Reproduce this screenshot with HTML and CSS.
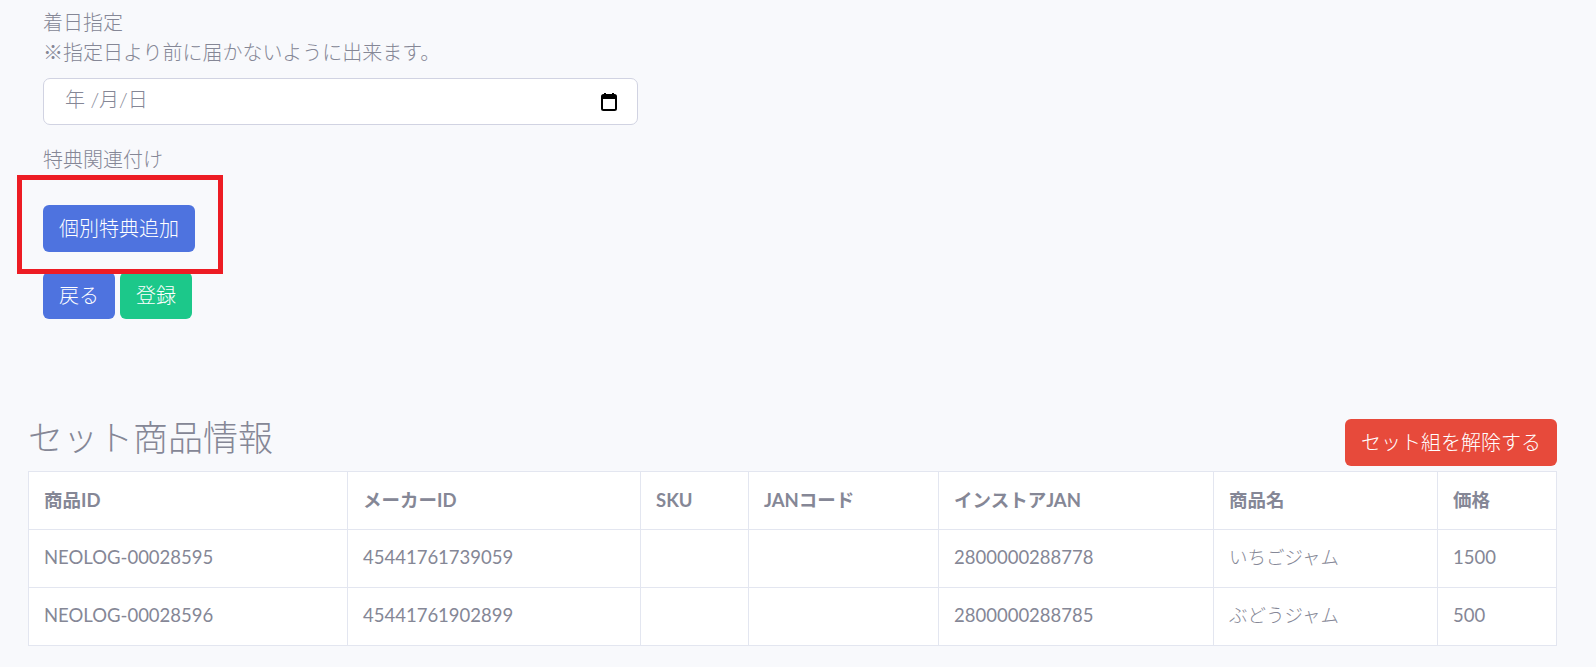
FILE: index.html
```html
<!DOCTYPE html>
<html lang="ja">
<head>
<meta charset="utf-8">
<title>セット商品情報</title>
<link rel="stylesheet" href="styles.css">
</head>
<body>
<section class="form">
  <div class="field-label">着日指定</div>
  <div class="field-label">※指定日より前に届かないように出来ます。</div>
  <div class="date-input">
    <span>年 /月/日</span>
    <svg class="cal" viewBox="0 0 16 18" width="16" height="18"><path d="M4 0v2M12 0v2" stroke="#000" stroke-width="2"/><rect x="1" y="2" width="14" height="15" rx="1.5" fill="none" stroke="#000" stroke-width="2"/><rect x="1" y="2" width="14" height="4" fill="#000"/></svg>
  </div>
  <div class="field-label second">特典関連付け</div>
  <div class="highlight-wrap">
    <button class="btn primary">個別特典追加</button>
    <div class="highlight"></div>
  </div>
  <div class="actions">
    <button class="btn primary">戻る</button>
    <button class="btn success">登録</button>
  </div>
</section>
<section class="set-info">
  <div class="set-head">
    <h3>セット商品情報</h3>
    <button class="btn danger">セット組を解除する</button>
  </div>
  <table>
    <colgroup><col class="c1"><col class="c2"><col class="c3"><col class="c4"><col class="c5"><col class="c6"><col class="c7"></colgroup>
    <thead>
      <tr><th>商品ID</th><th>メーカーID</th><th>SKU</th><th>JANコード</th><th>インストアJAN</th><th>商品名</th><th>価格</th></tr>
    </thead>
    <tbody>
      <tr><td>NEOLOG-00028595</td><td>45441761739059</td><td></td><td></td><td>2800000288778</td><td class="jp">いちごジャム</td><td>1500</td></tr>
      <tr><td>NEOLOG-00028596</td><td>45441761902899</td><td></td><td></td><td>2800000288785</td><td class="jp">ぶどうジャム</td><td>500</td></tr>
    </tbody>
  </table>
</section>
</body>
</html>
```
FILE: styles.css
```css
* { box-sizing: border-box; }
html, body { margin: 0; padding: 0; }
body {
  background: #f8f9fc;
  color: #858796;
  font-family: "Lato", "Noto Sans CJK JP", sans-serif;
  font-size: 20px;
  font-weight: 300;
  line-height: 30px;
  height: 667px;
  overflow: hidden;
}
.form { padding: 7px 0 0 43px; }
.field-label { height: 30px; }
.date-input {
  display: flex;
  align-items: center;
  justify-content: space-between;
  width: 595px;
  height: 47px;
  margin-top: 11px;
  padding: 0 20px 0 21px;
  background: #fff;
  border: 1px solid #d1d3e2;
  border-radius: 7px;
}
.date-input span { position: relative; top: -3px; }
.cal { display: block; }
.second { margin-top: 19px; }
.highlight-wrap { position: relative; margin-top: 31px; width: 152px; height: 47px; }
.highlight {
  position: absolute;
  left: -26px;
  top: -30px;
  width: 206px;
  height: 99px;
  border: 5px solid #ed1c24;
  pointer-events: none;
}
.actions { display: flex; gap: 5px; margin-top: 20px; }
.btn {
  display: block;
  height: 47px;
  padding: 0 15px;
  border: 1px solid transparent;
  border-radius: 6px;
  color: #fff;
  font: inherit;
  line-height: 43px;
  white-space: nowrap;
}
.primary { background: #4e73df; }
.success { background: #1cc88a; }
.danger { background: #e74a3b; }
.set-info { margin: 97px 39px 0 28px; }
.set-head { display: flex; justify-content: space-between; align-items: flex-end; height: 50px; margin-bottom: 5px; }
h3 { margin: 0; font-size: 35px; font-weight: 300; line-height: 42px; position: relative; top: -8px; }
table { width: 100%; table-layout: fixed; border-collapse: collapse; background: #fff; }
th, td { height: 58px; padding: 0 15px; border: 1px solid #e3e6f0; text-align: left; vertical-align: middle; }
th { font-weight: 700; font-size: 18.5px; padding-bottom: 2px; }
td { font-size: 18.5px; font-weight: 400; padding-bottom: 4px; }
td.jp { font-weight: 300; }
.c1 { width: 319px; }
.c2 { width: 293px; }
.c3 { width: 108px; }
.c4 { width: 190px; }
.c5 { width: 275px; }
.c6 { width: 224px; }
.c7 { width: 119px; }
```
